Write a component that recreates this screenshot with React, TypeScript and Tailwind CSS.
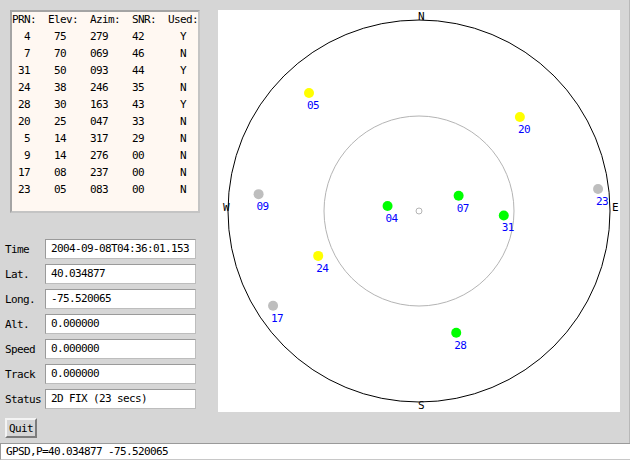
import React from "react";

type Sat = { prn: number; elev: number; az: number; snr: number; used: boolean };

const sats: Sat[] = [
  { prn: 4, elev: 75, az: 279, snr: 42, used: true },
  { prn: 7, elev: 70, az: 69, snr: 46, used: false },
  { prn: 31, elev: 50, az: 93, snr: 44, used: true },
  { prn: 24, elev: 38, az: 246, snr: 35, used: false },
  { prn: 28, elev: 30, az: 163, snr: 43, used: true },
  { prn: 20, elev: 25, az: 47, snr: 33, used: false },
  { prn: 5, elev: 14, az: 317, snr: 29, used: false },
  { prn: 9, elev: 14, az: 276, snr: 0, used: false },
  { prn: 17, elev: 8, az: 237, snr: 0, used: false },
  { prn: 23, elev: 5, az: 83, snr: 0, used: false },
];

const fields: [string, string][] = [
  ["Time", "2004-09-08T04:36:01.153"],
  ["Lat.", "40.034877"],
  ["Long.", "-75.520065"],
  ["Alt.", "0.000000"],
  ["Speed", "0.000000"],
  ["Track", "0.000000"],
  ["Status", "2D FIX (23 secs)"],
];

const pad = (n: number, w: number) => String(n).padStart(w, "0");

const rowText = (s: Sat) =>
  String(s.prn).padStart(3, " ") +
  "    " +
  pad(s.elev, 2) +
  "    " +
  pad(s.az, 3) +
  "    " +
  pad(s.snr, 2) +
  "      " +
  (s.used ? "Y" : "N");

const mono = "font-['DejaVu_Sans_Mono','Liberation_Mono',monospace] text-[11px] tracking-[-0.62px]";

function SkyView() {
  const cx = 201;
  const cy = 201;
  const R = 191;
  const color = (snr: number) => (snr >= 40 ? "#00ff00" : snr >= 20 ? "#ffff00" : "#bebebe");
  return (
    <svg width="402" height="402" viewBox="0 0 402 402" className="block bg-white">
      <circle cx={cx} cy={cy} r={R} fill="none" stroke="#000" strokeWidth="1" />
      <circle cx={cx} cy={cy} r={95} fill="none" stroke="#b4b4b4" strokeWidth="1" />
      <circle cx={cx} cy={cy} r={3} fill="none" stroke="#b4b4b4" strokeWidth="1" />
      <g fontFamily="DejaVu Sans Mono, Liberation Mono, monospace" fontSize="11" fill="#000">
        <text x={203} y={10} textAnchor="middle">N</text>
        <text x={203} y={399} textAnchor="middle">S</text>
        <text x={5} y={201}>W</text>
        <text x={394} y={201}>E</text>
      </g>
      {sats.map((s) => {
        const r = ((90 - s.elev) / 90) * R;
        const a = (s.az * Math.PI) / 180;
        const x = cx + r * Math.sin(a);
        const y = cy - r * Math.cos(a);
        return (
          <g key={s.prn}>
            <circle cx={x} cy={y} r={5} fill={color(s.snr)} />
            <text
              x={x - 2}
              y={y + 16}
              fill="#0000ff"
              fontSize="11"
              letterSpacing="-0.6"
              fontFamily="DejaVu Sans Mono, Liberation Mono, monospace"
            >
              {pad(s.prn, 2)}
            </text>
          </g>
        );
      })}
    </svg>
  );
}

export default function App() {
  return (
    <div className={`w-[630px] h-[460px] bg-[#d6d6d6] text-black flex flex-col overflow-hidden ${mono}`}>
      <div className="h-[443px] flex border-r border-[#b8b8b8]">
        <div className="w-[218px] flex flex-col">
          <div className="ml-[10px] mt-[10px] w-[190px] h-[203px] bg-[#fff8f2] border-2 border-t-[#a4a4a4] border-l-[#a4a4a4] border-b-[#c4c4c4] border-r-[#c4c4c4]">
            <div className="-mt-[1px] leading-[17px] whitespace-pre">
              <div>PRN:  Elev:  Azim:  SNR:  Used:</div>
              {sats.map((s) => (
                <div key={s.prn}>{rowText(s)}</div>
              ))}
            </div>
          </div>
          <div className="mt-[26px] flex flex-col gap-[5px]">
            {fields.map(([label, value]) => (
              <div key={label} className="flex items-center h-[20px]">
                <div className="w-[45px] pl-[5px] leading-none">{label}</div>
                <div className="w-[151px] h-[20px] bg-white border border-t-[#9a9a9a] border-l-[#9a9a9a] border-b-[#bdbdbd] border-r-[#bdbdbd] pl-[5px] flex items-center whitespace-pre">
                  {value}
                </div>
              </div>
            ))}
          </div>
          <div className="mt-[9px] ml-[5px]">
            <button className="w-[32px] h-[20px] border-2 border-t-[#f4f4f4] border-l-[#f4f4f4] border-b-[#7c7c7c] border-r-[#7c7c7c] bg-[#d6d6d6] flex items-center justify-center leading-none">
              Quit
            </button>
          </div>
        </div>
        <div className="pt-[10px]">
          <SkyView />
        </div>
      </div>
      <div className="h-[17px] bg-white border-t border-l border-[#9a9a9a] border-b border-b-[#c8c8c8] pl-[5px] flex items-center whitespace-pre leading-none">
        GPSD,P=40.034877 -75.520065
      </div>
    </div>
  );
}
